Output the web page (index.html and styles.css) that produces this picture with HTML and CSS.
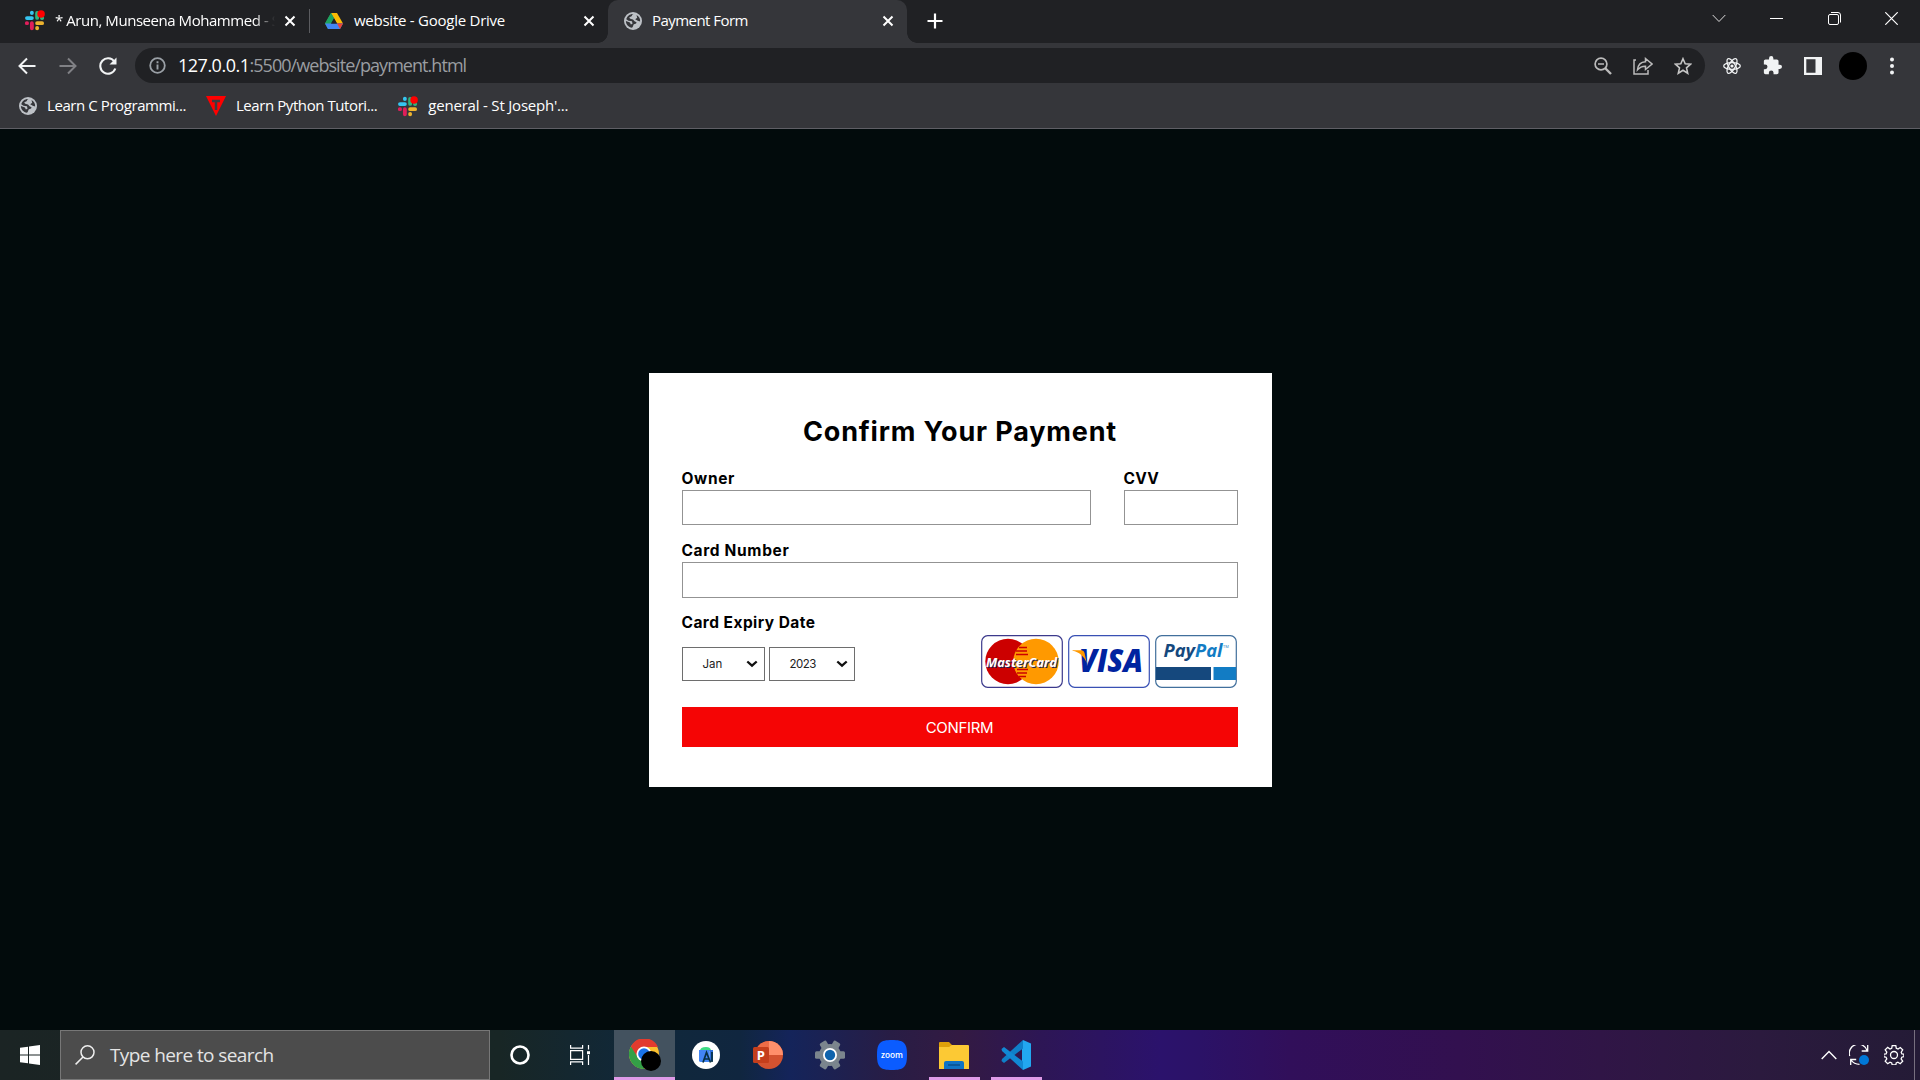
FILE: index.html
```html
<!DOCTYPE html>
<html lang="en">
<head>
<meta charset="utf-8">
<title>Payment Form</title>
<link rel="stylesheet" href="styles.css">
</head>
<body>
<svg class="defs" width="0" height="0">
  <defs>
    <symbol id="slack" viewBox="0 0 24 24">
      <g stroke-width="4.4" stroke-linecap="round">
        <path d="M9 3v.5M3.4 9.2H9" stroke="#36c5f0"/>
        <path d="M15 3.4V9M20.8 9.2h-.3" stroke="#2eb67d"/>
        <path d="M15 20.8v-.3M15 15h5.7" stroke="#ecb22e"/>
        <path d="M9 15v5.8M3.2 15h.3" stroke="#e01e5a"/>
      </g>
      <circle cx="19.5" cy="4.5" r="4.3" fill="#f00"/>
    </symbol>
    <symbol id="globe" viewBox="0 0 18 18">
      <circle cx="9" cy="9" r="9" fill="#bdc1c6"/>
      <path d="M9.500 2C7.500 2.500 8.500 4.500 6.500 4.800S5.500 6.500 7 7s2.500.500 3 1.700 2.500.600 2.500 1.800-1.500 1.300-2.500 1.800-.500 2.200-2 3.500C4.500 15 1.900 12.500 1.900 9l4 1.500 1 2 1.600-.800L8 9.300 4.500 8.700 2.300 7.300C3 4 6 1.800 9.500 2zM12.500 3c2.500 1.300 4 4 3.600 6.500l-2.300-.800-2.600-1.500 2-1.400z" fill="#35363a"/>
    </symbol>
    <symbol id="cross" viewBox="0 0 12 12"><path d="M1.500 1.500l9 9M10.500 1.500l-9 9" stroke="#fff" stroke-width="2" fill="none"/></symbol>
    <symbol id="chev" viewBox="0 0 12 8"><path d="M1.300 1.500L6 5.700l4.700-4.200" stroke="#111" stroke-width="2.300" fill="none"/></symbol>
  </defs>
</svg>

<header class="browser">
  <div class="tabstrip">
    <div class="tab first">
      <svg class="fav slack"><use href="#slack"/></svg>
      <span class="tab-title faded t-slack">* Arun, Munseena Mohammed - S</span>
      <svg class="close"><use href="#cross"/></svg>
    </div>
    <div class="tab second">
      <svg class="fav drive" viewBox="0 0 18 16">
        <path d="M6 0h6L9 5.300z" fill="#188038"/><path d="M6 0l3 5.300L3 16 0 10.600z" fill="#34a853"/>
        <path d="M6 0h6l6 10.600h-6z" fill="#fbbc04"/><path d="M6 0l3 5.300L6 10.600H0z" fill="#1ea362"/>
        <path d="M0 10.600h18L15 16H3z" fill="#4285f4"/><path d="M12 10.600h6L15 16z" fill="#ea4335"/><path d="M9 5.300l3 5.300H6z" fill="#202124"/>
      </svg>
      <span class="tab-title t-drive">website - Google Drive</span>
      <svg class="close"><use href="#cross"/></svg>
    </div>
    <div class="tab active">
      <svg class="fav globe"><use href="#globe"/></svg>
      <span class="tab-title t-pay">Payment Form</span>
      <svg class="close"><use href="#cross"/></svg>
    </div>
    <svg class="newtab" viewBox="0 0 16 16"><path d="M8 .5v15M.5 8h15" stroke="#fff" stroke-width="2.200"/></svg>
    <div class="window-controls">
      <svg width="14" height="9" viewBox="0 0 14 9"><path d="M.7 1l6.300 6.500L13.300 1" stroke="#ddd" fill="none"/></svg>
      <svg width="13" height="13" viewBox="0 0 13 13"><path d="M0 6.500h13" stroke="#fff"/></svg>
      <svg width="13" height="13" viewBox="0 0 13 13" fill="none" stroke="#fff"><rect x=".5" y="2.500" width="10" height="10" rx="1.500"/><path d="M3 .5h7a2.500 2.500 0 0 1 2.500 2.500v7.500"/></svg>
      <svg width="13" height="13" viewBox="0 0 13 13"><path d="M.3.3l12.400 12.400M12.700.3L.3 12.700" stroke="#fff" stroke-width="1.200"/></svg>
    </div>
  </div>

  <div class="toolbar">
    <div class="nav">
      <svg width="18" height="18" viewBox="0 0 18 18" fill="none" stroke="#f1f3f4" stroke-width="2"><path d="M17.500 9H2M9 1.500L1.500 9 9 16.500"/></svg>
      <svg width="18" height="18" viewBox="0 0 18 18" fill="none" stroke="#808185" stroke-width="2"><path d="M.5 9H16M9 1.500L16.500 9 9 16.500"/></svg>
      <svg width="18" height="18" viewBox="0 0 18 18"><path d="M15.300 4.500A7.700 7.700 0 1 0 16.300 11.500" fill="none" stroke="#f1f3f4" stroke-width="2.100"/><path d="M17.500 .5v7h-7z" fill="#f1f3f4"/></svg>
    </div>
    <div class="omnibox">
      <svg width="17" height="17" viewBox="0 0 17 17"><circle cx="8.500" cy="8.500" r="7.300" fill="none" stroke="#9aa0a6" stroke-width="1.800"/><path d="M8.500 7.500v5M8.500 4.300v1.900" stroke="#9aa0a6" stroke-width="1.900"/></svg>
      <span class="url"><b>127.0.0.1</b>:5500/website/payment.html</span>
      <div class="omni-icons">
        <svg width="18" height="18" viewBox="0 0 18 18" fill="none" stroke="#bbb"><circle cx="7" cy="7" r="5.900" stroke-width="1.700"/><path d="M4 7h6" stroke-width="1.500"/><path d="M11 11l6 6" stroke-width="2.400"/></svg>
        <svg width="20" height="18" viewBox="0 0 20 18" fill="none" stroke="#bbb" stroke-width="1.500"><path d="M3 3H1v14h14v-4"/><path d="M12.500 1.500L19 7l-6.500 5.500V9.200C9 9 7 10 4.500 12.800 5 8 7.500 5 12.500 4.800z"/></svg>
        <svg width="18" height="18" viewBox="0 0 18 18"><path d="M9 1.700l2.200 5 5.400.5-4.100 3.600 1.200 5.400L9 13.300l-4.700 2.900 1.200-5.400-4.100-3.600 5.400-.5z" fill="none" stroke="#c5c5c5" stroke-width="1.600"/></svg>
      </div>
    </div>
    <div class="extensions">
      <svg width="18" height="18" viewBox="-9 -9 18 18" fill="none" stroke="#f1f3f4" stroke-width="1.300"><ellipse rx="8.300" ry="3.300"/><ellipse rx="8.300" ry="3.300" transform="rotate(60)"/><ellipse rx="8.300" ry="3.300" transform="rotate(120)"/><circle r="1.600" fill="#f1f3f4" stroke="none"/></svg>
      <svg width="19" height="19" viewBox="1 1 22 22"><path d="M20.500 11H19V7c0-1.100-.9-2-2-2h-4V3.500a2.500 2.500 0 0 0-5 0V5H4c-1.100 0-2 .9-2 2v3.800h1.500a2.700 2.700 0 0 1 0 5.400H2V20c0 1.100.9 2 2 2h3.800v-1.500a2.700 2.700 0 0 1 5.400 0V22H17c1.100 0 2-.9 2-2v-4h1.500a2.500 2.500 0 0 0 0-5z" fill="#f1f3f4"/></svg>
      <svg width="18" height="18" viewBox="0 0 18 18"><path d="M0 0h18v18H0zM2.300 2.300v13.400H11.500V2.300z" fill="#f1f3f4" fill-rule="evenodd"/></svg>
      <span class="avatar"></span>
      <svg class="menu" width="4" height="18" viewBox="0 0 4 18" fill="#f1f3f4"><circle cx="2" cy="2.500" r="2"/><circle cx="2" cy="9" r="2"/><circle cx="2" cy="15.500" r="2"/></svg>
    </div>
  </div>

  <nav class="bookmarks">
    <div class="bookmark"><svg width="18" height="18"><use href="#globe"/></svg><span class="b-c">Learn C Programmi...</span></div>
    <div class="bookmark"><svg width="20" height="20" viewBox="0 0 20 20"><path d="M0 0h20L10 20z" fill="#f00"/><path d="M6 5h8M10 5v9" stroke="#3c3c40" stroke-width="2.500"/></svg><span class="b-py">Learn Python Tutori...</span></div>
    <div class="bookmark"><svg width="21" height="21"><use href="#slack"/></svg><span class="b-gen">general - St Joseph'...</span></div>
  </nav>
</header>

<main class="page">
  <form class="card">
    <h1><span>Confirm Your Payment</span></h1>
    <div class="row">
      <label class="field owner"><span>Owner</span><input type="text"></label>
      <label class="field cvv"><span>CVV</span><input type="text"></label>
    </div>
    <label class="field number"><span>Card Number</span><input type="text"></label>
    <div class="row expiry">
      <div class="date">
        <span class="label">Card Expiry Date</span>
        <div class="selects">
          <div class="select month"><span>Jan</span><svg width="12" height="8"><use href="#chev"/></svg></div>
          <div class="select year"><span>2023</span><svg width="12" height="8"><use href="#chev"/></svg></div>
        </div>
      </div>
      <div class="brands">
        <svg width="82" height="53" viewBox="0 0 82 53">
          <rect x=".7" y=".7" width="80.600" height="51.600" rx="6" fill="#fff" stroke="#3c3a8c" stroke-width="1.200"/>
          <circle cx="27" cy="26.500" r="22.700" fill="#c00"/><circle cx="55" cy="26.500" r="22.700" fill="#f90"/>
          <path d="M38 12.500h8M35 16h11M35 19.500h12M36 34.500h11M36 38h10M38 41.500h7" stroke="#c00" stroke-width="1.700"/>
          <text x="6" y="32.500" class="mc shadow" textLength="71" lengthAdjust="spacingAndGlyphs">MasterCard</text>
          <text x="5" y="31.500" class="mc" textLength="71" lengthAdjust="spacingAndGlyphs">MasterCard</text>
        </svg>
        <svg width="82" height="53" viewBox="0 0 82 53">
          <rect x=".7" y=".7" width="80.600" height="51.600" rx="6" fill="#fff" stroke="#3850b4" stroke-width="1.200"/>
          <text x="11" y="37" class="visa" textLength="64" lengthAdjust="spacingAndGlyphs">VISA</text>
          <path d="M4.500 15.200H13q3 0 3.600 3l2.200 10C16 21 11 17 4.500 15.800z" fill="#f90"/>
        </svg>
        <svg width="82" height="53" viewBox="0 0 82 53">
          <rect x=".7" y=".7" width="80.600" height="51.600" rx="6" fill="#fff" stroke="#416f9c" stroke-width="1.200"/>
          <text x="8.500" y="21.500" class="paypal" textLength="59" lengthAdjust="spacingAndGlyphs"><tspan fill="#15487d">Pay</tspan><tspan fill="#127cc4">Pal</tspan></text>
          <text x="68" y="12.500" class="tm">TM</text>
          <path d="M1 32h55v13H1z" fill="#15487d"/><path d="M58.500 32H81v13H58.500z" fill="#127cc4"/>
        </svg>
      </div>
    </div>
    <button type="button"><span>CONFIRM</span></button>
  </form>
</main>

<footer class="taskbar">
  <div class="start"><svg width="20" height="20" viewBox="0 0 20 20" fill="#fff"><path d="M0 2.800l8-1.100v7.800H0zM9 1.500L20 0v9.500H9zM0 10.500h8v7.800l-8-1.100zM9 10.500h11V20L9 18.500z"/></svg></div>
  <div class="search">
    <svg width="20" height="20" viewBox="0 0 20 20" fill="none" stroke="#eee" stroke-width="1.500"><circle cx="12.500" cy="7.300" r="6.500"/><path d="M8 12L.6 19.400"/></svg>
    <span>Type here to search</span>
  </div>
  <div class="app sys"><svg width="20" height="20" viewBox="0 0 20 20"><circle cx="10" cy="10" r="8.500" fill="none" stroke="#fff" stroke-width="2.600"/></svg></div>
  <div class="app sys"><svg width="20" height="20" viewBox="0 0 20 20" fill="none" stroke="#fff" stroke-width="1.200"><path d="M.6 0v3.200h12V0M.6 20v-3.200h12V20M.6 5.600h12v8.800H.6zM18.500 0v4.500M18.500 10v10"/><path d="M17 6.200h3v3h-3z" fill="#fff" stroke="none"/></svg></div>
  <div class="app current">
    <svg width="32" height="32" viewBox="0 0 32 32">
      <circle cx="15" cy="15" r="15" fill="#fbc02d"/><path d="M15 15L2 7.500A15 15 0 0 0 15 30l7.500-11z" fill="#34a047"/><path d="M2 7.500A15 15 0 0 1 29 8H15l-6.500 10z" fill="#e23b2e"/>
      <circle cx="15" cy="15" r="7.500" fill="#fff"/><circle cx="15" cy="15" r="5.800" fill="#1a73e8"/><circle cx="22" cy="22" r="10" fill="#000"/>
    </svg>
  </div>
  <div class="app">
    <svg width="28" height="28" viewBox="0 0 28 28"><circle cx="14" cy="14" r="14" fill="#fff"/><path d="M8 10q0-4 6-4 5 0 5 4z" fill="#3ddc84"/><path d="M7 9h10.500v12H9q-2 0-2-1.500z" fill="#4285f4"/><path d="M17.500 9H21v11h-3.500z" fill="#2f6fdc"/><path d="M11 21.500l3.500-10 4 10M11.500 18h6M20 11v10" fill="none" stroke="#073042" stroke-width="1.700"/></svg>
  </div>
  <div class="app">
    <svg width="30" height="28" viewBox="0 0 30 28"><circle cx="16" cy="14" r="14" fill="#d35230"/><path d="M16 0a14 14 0 0 1 14 14H16z" fill="#ff8f6b"/><path d="M16 0v14H2A14 14 0 0 1 16 0z" fill="#ed6c47"/><rect x="0" y="6" width="16" height="16" rx="1.500" fill="#c43e1c"/><text x="3.800" y="18.600" class="ppt">P</text></svg>
  </div>
  <div class="app">
    <svg width="30" height="30" viewBox="-15 -15 30 30">
      <g fill="#7b858d"><circle r="11"/><rect x="-15" y="-3.800" width="30" height="7.600" rx="1.500"/><rect x="-15" y="-3.800" width="30" height="7.600" rx="1.500" transform="rotate(60)"/><rect x="-15" y="-3.800" width="30" height="7.600" rx="1.500" transform="rotate(120)"/></g>
      <circle r="7" fill="#fff"/><circle r="5.200" fill="#0f64ad"/>
    </svg>
  </div>
  <div class="app">
    <svg width="30" height="30" viewBox="0 0 30 30"><path d="M15 0c12 0 15 3 15 15s-3 15-15 15S0 27 0 15 3 0 15 0z" fill="#0b5cff"/><text x="4" y="17.500" class="zoom" textLength="22" lengthAdjust="spacingAndGlyphs">zoom</text></svg>
  </div>
  <div class="app running">
    <svg width="30" height="27" viewBox="0 0 30 27"><path d="M0 1q0-1 1-1h9l3 3h15v6H0z" fill="#dfa00a"/><path d="M0 5h10l3-2h16q1 0 1 1v23H0z" fill="#fcc934"/><path d="M5 27v-6q0-2 2-2h16q2 0 2 2v6z" fill="#0f73c5"/><path d="M9 23h12" stroke="#084d89" stroke-width="1.400"/></svg>
  </div>
  <div class="app running">
    <svg width="30" height="30" viewBox="0 0 30 30"><path d="M22 0l8 3.500v23L22 30l-1-8V8z" fill="#22a7f0"/><path d="M22 0L1 19l-.5 2L3 23l19-14.500z" fill="#0f7fc9"/><path d="M3 7L.5 9l.5 2 21 19v-8.500z" fill="#1188d4"/></svg>
  </div>
  <div class="tray">
    <svg width="16" height="10" viewBox="0 0 16 10"><path d="M.7 9L8 1.500 15.300 9" fill="none" stroke="#fff" stroke-width="1.400"/></svg>
    <svg width="20" height="20" viewBox="0 0 20 20"><path d="M.7 11A8.800 8.800 0 0 1 18 5.500M18.700 0v6h-6M10.500 19.300Q5 19.300 2 15M1.700 20.500v-6h5.500" fill="none" stroke="#fff" stroke-width="1.300"/><circle cx="15" cy="15" r="5" fill="#0078d7"/></svg>
    <svg class="gear" width="20" height="20" viewBox="-10 -10 20 20" fill="none" stroke="#fff" stroke-width="1.300"><path d="M-1.800-9.300h3.600l.5 2.700 1.700.7 2.300-1.600 2.400 2.400-1.500 2.300.7 1.700 2 .3v2.400l-2.100.6-.7 1.700 1.600 2.300-2.500 2.500-2.300-1.500-1.700.7-.4 2.100h-3.600l-.5-2.100-1.700-.7-2.300 1.500-2.500-2.500 1.600-2.300-.7-1.700-2.400-.5v-2.500l2.400-.4.7-1.700-1.600-2.300 2.500-2.400 2.300 1.600 1.700-.7z"/><circle r="3.500"/></svg>
  </div>
</footer>
</body>
</html>
```

FILE: styles.css
```css
* { box-sizing: border-box; }

body {
  margin: 0;
  width: 1920px;
  height: 1080px;
  overflow: hidden;
  display: flex;
  flex-direction: column;
  background: #020b0c;
  font-family: "Open Sans", "Noto Sans", sans-serif;
}

svg { display: block; flex: none; }
.defs { position: absolute; }

/* Browser window */
.browser { height: 129px; background: #35363a; color: #fff; border-bottom: 1px solid #5f5f65; }

.tabstrip { display: flex; height: 43px; background: #202124; }
.tab { display: flex; align-items: center; height: 43px; padding-bottom: 1px; font-size: 15px; white-space: nowrap; }
.tab.first { width: 310px; padding-left: 24px; border-right: 1px solid #5b5c60; height: 24px; margin-top: 9px; }
.tab.second { width: 298px; padding-left: 15px; }
.tab.active { position: relative; width: 299px; padding-left: 16px; background: #35363a; border-radius: 10px 10px 0 0; }
/* Flared feet where the active tab meets the toolbar */
.tab.active::before, .tab.active::after { content: ""; position: absolute; bottom: 0; width: 10px; height: 10px; }
.tab.active::before { right: 100%; background: radial-gradient(circle at 0 0, transparent 9.5px, #35363a 10px); }
.tab.active::after { left: 100%; background: radial-gradient(circle at 100% 0, transparent 9.5px, #35363a 10px); }
.tab-title { flex: none; padding-bottom: 2px; }
.close { width: 12px; height: 12px; margin-left: auto; margin-right: 13px; }
.fav.slack { width: 21px; height: 21px; margin-right: 10px; }
.fav.drive { width: 18px; height: 16px; margin-right: 11px; }
.fav.globe { width: 18px; height: 18px; margin-right: 10px; }
.t-slack { letter-spacing: -.45px; }
.t-drive { letter-spacing: -.25px; }
.t-pay { letter-spacing: -.55px; }
.faded { mask-image: linear-gradient(to right, #000 200px, transparent 220px); }
.newtab { width: 16px; height: 16px; margin: 13px 0 0 20px; }
.window-controls { display: flex; align-items: center; height: 37px; margin-left: auto; margin-right: 22px; gap: 44.500px; }

.toolbar { display: flex; align-items: center; height: 45px; }
.nav { display: flex; width: 135px; padding-left: 18px; gap: 22.500px; }
.omnibox { display: flex; align-items: center; width: 1570px; height: 35px; padding: 0 13px 0 14px; border-radius: 18px; background: #202124; }
.url { margin-left: 12px; padding-bottom: 2px; font-size: 18px; color: #9a9da1; letter-spacing: -.95px; }
.url b { font-weight: 400; color: #fff; letter-spacing: -.5px; }
.omni-icons { display: flex; margin-left: auto; gap: 21px; }
.extensions { display: flex; align-items: center; margin-left: 18px; gap: 22px; }
.avatar { width: 28px; height: 28px; margin-left: -5px; border-radius: 50%; background: #000; }
.menu { margin-left: 1px; }

.bookmarks { display: flex; align-items: center; height: 36px; padding-left: 19px; font-size: 15px; white-space: nowrap; }
.bookmark { display: flex; align-items: center; gap: 10px; }
.bookmark + .bookmark { margin-left: 20px; }
.bookmark span { padding-bottom: 2px; }
.b-c, .b-py { letter-spacing: -.42px; }
.b-gen { letter-spacing: -.2px; }

/* Payment page */
.page { flex: 1; display: flex; justify-content: center; padding-top: 244px; font-family: Inter, sans-serif; color: #000; }
.card { width: 623px; height: 414px; padding: 42px 34px 0 33px; background: #fff; }
h1 { margin: 0; height: 52px; padding-left: 1px; text-align: center; font-size: 27px; line-height: 34px; font-weight: 700; letter-spacing: .83px; white-space: nowrap; }
.row { display: flex; justify-content: space-between; }
.field { display: flex; flex-direction: column; height: 72px; }
.field span, .label { height: 23px; font-size: 15.500px; line-height: 24px; font-weight: 700; letter-spacing: .65px; }
.field input { width: 100%; height: 35px; padding: 0; border: 1px solid #939393; background: #fff; }
.owner { width: 409px; }
.cvv { width: 114px; }
.field.cvv span { letter-spacing: .3px; }
.number input { height: 36px; }
.expiry .label { letter-spacing: .45px; }
.expiry { height: 96px; }
.date { display: flex; flex-direction: column; }
.selects { display: flex; gap: 4px; margin-top: 13px; }
.select { display: flex; align-items: center; justify-content: space-between; height: 34px; padding: 0 7px 0 20px; border: 1px solid #6e6e6e; font-size: 11.500px; color: #222; }
.month { width: 83px; padding-right: 6px; }
.year { width: 86px; padding-right: 6px; }
.year span { letter-spacing: -.5px; }
.brands { display: flex; gap: 5px; margin-top: 24px; margin-right: 1px; }
button { display: block; width: 556px; height: 40px; padding: 0; border: 0; background: #f50505; color: #fff; font: 400 15px/42px Inter, sans-serif; letter-spacing: -.3px; }

.mc { font: italic 700 13px "Open Sans", sans-serif; fill: #fff; }
.mc.shadow { fill: #222254; }
.visa { font: italic 800 31px "Open Sans", sans-serif; fill: #0023a0; }
.paypal { font: italic 700 17px "Open Sans", sans-serif; }
.tm { font: 4px "Open Sans", sans-serif; fill: #127cc4; }

/* Taskbar */
.taskbar {
  display: flex;
  height: 50px;
  background: linear-gradient(to right, #1b2424 0, #182625 500px, #10283a 640px, #10263f 740px, #14245a 790px, #281d45 890px, #331a42 960px, #2d1655 1040px, #2b126c 1160px, #2b1267 1200px, #310f5a 1290px, #32104f 1460px, #301546 1600px, #2b1a3e 1760px, #241b36 1920px);
}
.start { display: flex; align-items: center; width: 60px; padding-left: 20px; }
.search { display: flex; align-items: center; width: 430px; padding-left: 14px; gap: 15px; border: 1px solid #777; background: #4c4c4c; color: #e4e4e4; font-size: 19px; letter-spacing: -.6px; }
.app { display: flex; align-items: center; justify-content: center; width: 62px; }
.app.sys { width: 60px; }
.app.sys + .app.sys { width: 64px; padding-right: 4px; }
.current { width: 61px; background: #43525f; border-bottom: 3px solid #df9be8; padding-top: 3px; }
.running { background: linear-gradient(#df9be8, #df9be8) center bottom / 51px 3px no-repeat; }
.tray { display: flex; align-items: center; gap: 12px; margin-left: auto; padding-right: 10px; border-right: 1px solid #77707f; margin-right: 5px; }
.gear { margin-left: 3px; }

.ppt { font: 700 13px "Open Sans", sans-serif; fill: #fff; }
.zoom { font: 600 8px "Open Sans", sans-serif; fill: #fff; }
```
